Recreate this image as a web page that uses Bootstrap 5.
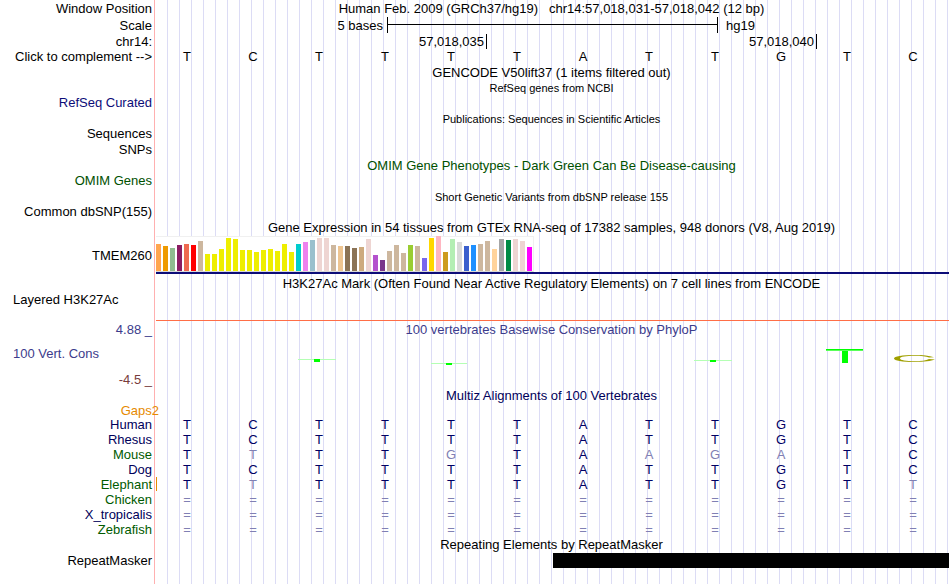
<!DOCTYPE html>
<html lang="en">
<head>
  <meta charset="UTF-8">
  <meta name="viewport" content="width=device-width, initial-scale=1">
  <title>Human chr14:57,018,031-57,018,042</title>
  <link href="https://cdn.jsdelivr.net/npm/bootstrap@5.3.3/dist/css/bootstrap.min.css" rel="stylesheet">
  <style>
    body {
      font-family: "Liberation Sans", Arial, sans-serif;
      font-size: 13px;
      line-height: 16px;
      color: #000;
    }
    #browser {
      padding-right: 1px;
      background:
        linear-gradient(#ffb0b0, #ffb0b0) 154px 0 / 1px 100% no-repeat,
        repeating-linear-gradient(to right, #dcdcf5 0 1px, transparent 1px 12px) 167px 0 no-repeat,
        #fff;
    }
    .trk { min-height: 16px; }
    .trk-13 { min-height: 13px; line-height: 13px; }
    .trk-15 { min-height: 15px; line-height: 15px; }
    .trk-17 { min-height: 17px; line-height: 17px; }
    .trk-item { min-height: 15px; line-height: 13px; }
    .trk-label {
      width: 154px;
      padding-left: 13px;
      padding-right: 2px;
      text-align: right;
      white-space: nowrap;
    }
    .trk-plot { min-width: 0; text-align: center; }
    .tiny { font-size: 11px; }
    .complement {
      border: 0;
      padding: 0;
      background: none;
      color: inherit;
    }

    .c-refseq { color: #0c0c78; }
    .c-omim { color: #005000; }
    .c-cons { color: #3c3c8c; }
    .c-neg { color: #783c3c; }
    .c-multiz { color: #00005a; }
    .c-green { color: #005a00; }
    .c-gaps { color: #e68a00; }
    .c-gaps span { margin-right: -7px; }

    .bases { padding-right: 3px; }
    .bases span { flex: 1 1 0; }
    .species .bases { color: #000064; }
    .species .bases .diff { color: #8080b4; }

    /* scale bar and coordinate ticks */
    .scale-grid { display: grid; grid-template-columns: 233fr 331fr 228fr; padding-right: 3px; }
    .ruler {
      height: 16px;
      border: solid #000;
      border-width: 0 1px;
      background: linear-gradient(#000, #000) 0 7px / 100% 1px no-repeat;
    }
    .coord-grid { display: grid; grid-template-columns: 333fr 330fr 129fr; padding-right: 3px; }
    .coord { border-right: 1px solid #000; padding-right: 2px; text-align: right; }

    .gtex {
      height: 36px;
      margin-left: 2px;
      padding-right: 1px;
      gap: 2px;
      border: 1px solid #f0f0f0;
      border-left: 0;
      border-bottom-color: #d8d8d8;
      background: #fff;
    }
    .gtex span { width: 5px; }
    .gene-line { height: 2px; margin-left: 156px; background: #0c0c78; }
    .h3k-title { line-height: 19px; }
    .h3k-signal { height: 27px; }
    .h3k-line { height: 1px; margin-left: 156px; background: #ff6e46; }
    .wiggle svg { display: block; width: 100%; height: 50px; }
    .gap-mark { width: 1px; height: 14px; background: #e68a00; margin-left: 2px; }
    .repeat { height: 15px; margin-left: 50.2%; background: #000; }
  </style>
</head>
<body>
  <main id="browser" class="min-vh-100">

    <!-- Position, scale and sequence -->
    <div class="trk trk-17 d-flex">
      <div class="trk-label">Window Position</div>
      <div class="trk-plot flex-grow-1">Human Feb. 2009 (GRCh37/hg19) &nbsp; chr14:57,018,031-57,018,042 (12 bp)</div>
    </div>
    <div class="trk trk-17 d-flex">
      <div class="trk-label">Scale</div>
      <div class="trk-plot flex-grow-1 scale-grid">
        <div class="text-end pe-1">5 bases</div>
        <div class="ruler"></div>
        <div class="text-start ps-2">hg19</div>
      </div>
    </div>
    <div class="trk trk-15 d-flex">
      <div class="trk-label">chr14:</div>
      <div class="trk-plot flex-grow-1 coord-grid">
        <div class="coord">57,018,035</div>
        <div class="coord">57,018,040</div>
      </div>
    </div>
    <div class="trk d-flex">
      <div class="trk-label"><button type="button" class="complement" id="complementBtn">Click to complement --&gt;</button></div>
      <div class="trk-plot flex-grow-1 bases d-flex" id="sequence"></div>
    </div>

    <!-- Gene and variant tracks -->
    <div class="trk d-flex">
      <div class="trk-label"></div>
      <div class="trk-plot flex-grow-1">GENCODE V50lift37 (1 items filtered out)</div>
    </div>
    <div class="trk trk-15 d-flex">
      <div class="trk-label"></div>
      <div class="trk-plot flex-grow-1 tiny">RefSeq genes from NCBI</div>
    </div>
    <div class="trk trk-item d-flex">
      <div class="trk-label c-refseq">RefSeq Curated</div>
    </div>
    <div class="trk d-flex">
      <div class="trk-label"></div>
      <div class="trk-plot flex-grow-1 tiny">Publications: Sequences in Scientific Articles</div>
    </div>
    <div class="trk trk-item d-flex">
      <div class="trk-label">Sequences</div>
    </div>
    <div class="trk d-flex">
      <div class="trk-label">SNPs</div>
    </div>
    <div class="trk d-flex">
      <div class="trk-label"></div>
      <div class="trk-plot flex-grow-1 c-omim">OMIM Gene Phenotypes - Dark Green Can Be Disease-causing</div>
    </div>
    <div class="trk trk-item d-flex">
      <div class="trk-label c-omim">OMIM Genes</div>
    </div>
    <div class="trk d-flex">
      <div class="trk-label"></div>
      <div class="trk-plot flex-grow-1 tiny">Short Genetic Variants from dbSNP release 155</div>
    </div>
    <div class="trk trk-item d-flex">
      <div class="trk-label">Common dbSNP(155)</div>
    </div>

    <!-- GTEx expression -->
    <div class="trk d-flex">
      <div class="trk-label"></div>
      <div class="trk-plot flex-grow-1">Gene Expression in 54 tissues from GTEx RNA-seq of 17382 samples, 948 donors (V8, Aug 2019)</div>
    </div>
    <div class="trk d-flex align-items-center">
      <div class="trk-label pt-1">TMEM260</div>
      <div class="gtex d-flex align-items-end" id="gtex"></div>
    </div>
    <div class="gene-line"></div>

    <!-- Histone marks -->
    <div class="trk h3k-title d-flex">
      <div class="trk-label"></div>
      <div class="trk-plot flex-grow-1">H3K27Ac Mark (Often Found Near Active Regulatory Elements) on 7 cell lines from ENCODE</div>
    </div>
    <div class="trk trk-13 h3k-signal d-flex">
      <div class="trk-label text-start">Layered H3K27Ac</div>
    </div>
    <div class="h3k-line"></div>

    <!-- Conservation -->
    <div class="trk trk-17 d-flex c-cons">
      <div class="trk-label">4.88 _</div>
      <div class="trk-plot flex-grow-1">100 vertebrates Basewise Conservation by PhyloP</div>
    </div>
    <div class="wiggle d-flex">
      <div class="trk-label d-flex flex-column justify-content-between pt-2">
        <div class="c-cons text-start">100 Vert. Cons</div>
        <div class="c-neg">-4.5 _</div>
      </div>
      <div class="trk-plot flex-grow-1">
        <svg viewBox="154 338 795 50" preserveAspectRatio="none" shape-rendering="crispEdges" role="img" aria-label="PhyloP scores">
          <g fill="#b4ffb4">
            <rect x="298" y="359" width="38" height="1"/>
            <rect x="431" y="363" width="36" height="1"/>
            <rect x="694" y="360" width="38" height="1"/>
          </g>
          <g fill="#00ff00">
            <rect x="314" y="359" width="6" height="3"/>
            <rect x="446" y="363" width="6" height="2"/>
            <rect x="710" y="360" width="6" height="2"/>
            <rect x="826" y="349" width="37" height="1"/>
            <rect x="842" y="349" width="6" height="14"/>
          </g>
          <rect x="826" y="350" width="37" height="1" fill="#5aff5a"/>
          <path shape-rendering="auto" fill="#a0a000" d="M934 357.200C929 355.600 923 355 915 355C902 355 894 356.400 894 358.500C894 360.600 902 362 915 362C924 362 931 361.200 935 359.600L929 359C926 360.500 921 361.200 915 361.200C906 361.200 900 360.200 900 358.500C900 356.800 906 355.800 915 355.800C921 355.800 926 356.300 929 357.500Z"/>
        </svg>
      </div>
    </div>

    <!-- Multiz alignments -->
    <div class="trk d-flex">
      <div class="trk-label"></div>
      <div class="trk-plot flex-grow-1 c-multiz">Multiz Alignments of 100 Vertebrates</div>
    </div>
    <div class="trk trk-13 d-flex">
      <div class="trk-label c-gaps"><span>Gaps2</span></div>
    </div>
    <div id="alignments"></div>

    <!-- Repeats -->
    <div class="trk d-flex">
      <div class="trk-label"></div>
      <div class="trk-plot flex-grow-1">Repeating Elements by RepeatMasker</div>
    </div>
    <div class="trk trk-15 d-flex">
      <div class="trk-label">RepeatMasker</div>
      <div class="trk-plot flex-grow-1"><div class="repeat"></div></div>
    </div>
  </main>

  <script src="https://cdn.jsdelivr.net/npm/bootstrap@5.3.3/dist/js/bootstrap.bundle.min.js"></script>
  <script>
    const human = "TCTTTTATTGTC";

    // One cell per base; bases that differ from human are dimmed
    function baseCells(seq) {
      return [...seq].map((b, i) => `<span class="${b === human[i] ? "" : "diff"}">${b}</span>`).join("");
    }

    const sequence = document.getElementById("sequence");
    sequence.innerHTML = baseCells(human);

    const pairs = { A: "T", T: "A", C: "G", G: "C" };
    document.getElementById("complementBtn").addEventListener("click", () => {
      sequence.querySelectorAll("span").forEach(s => { s.textContent = pairs[s.textContent]; });
    });

    const species = [
      ["Human", "c-multiz", "TCTTTTATTGTC"],
      ["Rhesus", "c-multiz", "TCTTTTATTGTC"],
      ["Mouse", "c-green", "TTTTGTAAGATC"],
      ["Dog", "c-multiz", "TCTTTTATTGTC"],
      ["Elephant", "c-green", "TTTTTTATTGTT"],
      ["Chicken", "c-green", "============"],
      ["X_tropicalis", "c-multiz", "============"],
      ["Zebrafish", "c-green", "============"]
    ];
    document.getElementById("alignments").innerHTML = species.map(([name, color, seq]) => `
      <div class="trk trk-15 species d-flex">
        <div class="trk-label ${color}">${name}</div>
        <div class="trk-plot flex-grow-1 position-relative">
          ${name === "Elephant" ? '<div class="gap-mark position-absolute top-0 start-0"></div>' : ""}
          <div class="bases d-flex">${baseCells(seq)}</div>
        </div>
      </div>`).join("");

    // [colour, height] for each tissue
    const tissues = [
      ["#ffa54f", 27], ["#ee9a00", 25], ["#8fbc8f", 23], ["#8b1c62", 26], ["#ee6a50", 27], ["#ff0000", 26],
      ["#cdb79e", 30], ["#eeee00", 17], ["#eeee00", 17], ["#eeee00", 22], ["#eeee00", 33], ["#eeee00", 32],
      ["#eeee00", 21], ["#eeee00", 21], ["#eeee00", 19], ["#eeee00", 21], ["#eeee00", 22], ["#eeee00", 20],
      ["#eeee00", 27], ["#eeee00", 19], ["#00cdcd", 27], ["#ee82ee", 29], ["#9ac0cd", 31], ["#eed5d2", 33],
      ["#eed5d2", 33], ["#cdb79e", 26], ["#eec591", 25], ["#8b7355", 25], ["#8b7355", 23], ["#cdaa7d", 24],
      ["#eed5d2", 32], ["#b452cd", 16], ["#7a378b", 11], ["#cdb79e", 20], ["#cdb79e", 26], ["#cdb79e", 18],
      ["#9acd32", 26], ["#cdb79e", 25], ["#7a67ee", 13], ["#ffd700", 33], ["#ffb6c1", 35], ["#cd9b1d", 19],
      ["#b4eeb4", 32], ["#d9d9d9", 29], ["#3a5fcd", 25], ["#1e90ff", 26], ["#cdb79e", 27], ["#cdb79e", 30],
      ["#ffd39b", 22], ["#a6a6a6", 32], ["#008b45", 31], ["#eed5d2", 32], ["#eed5d2", 30], ["#ff00ff", 24]
    ];
    document.getElementById("gtex").innerHTML = tissues
      .map(([color, h]) => `<span style="height:${h}px;background:${color}"></span>`).join("");
  </script>
</body>
</html>
